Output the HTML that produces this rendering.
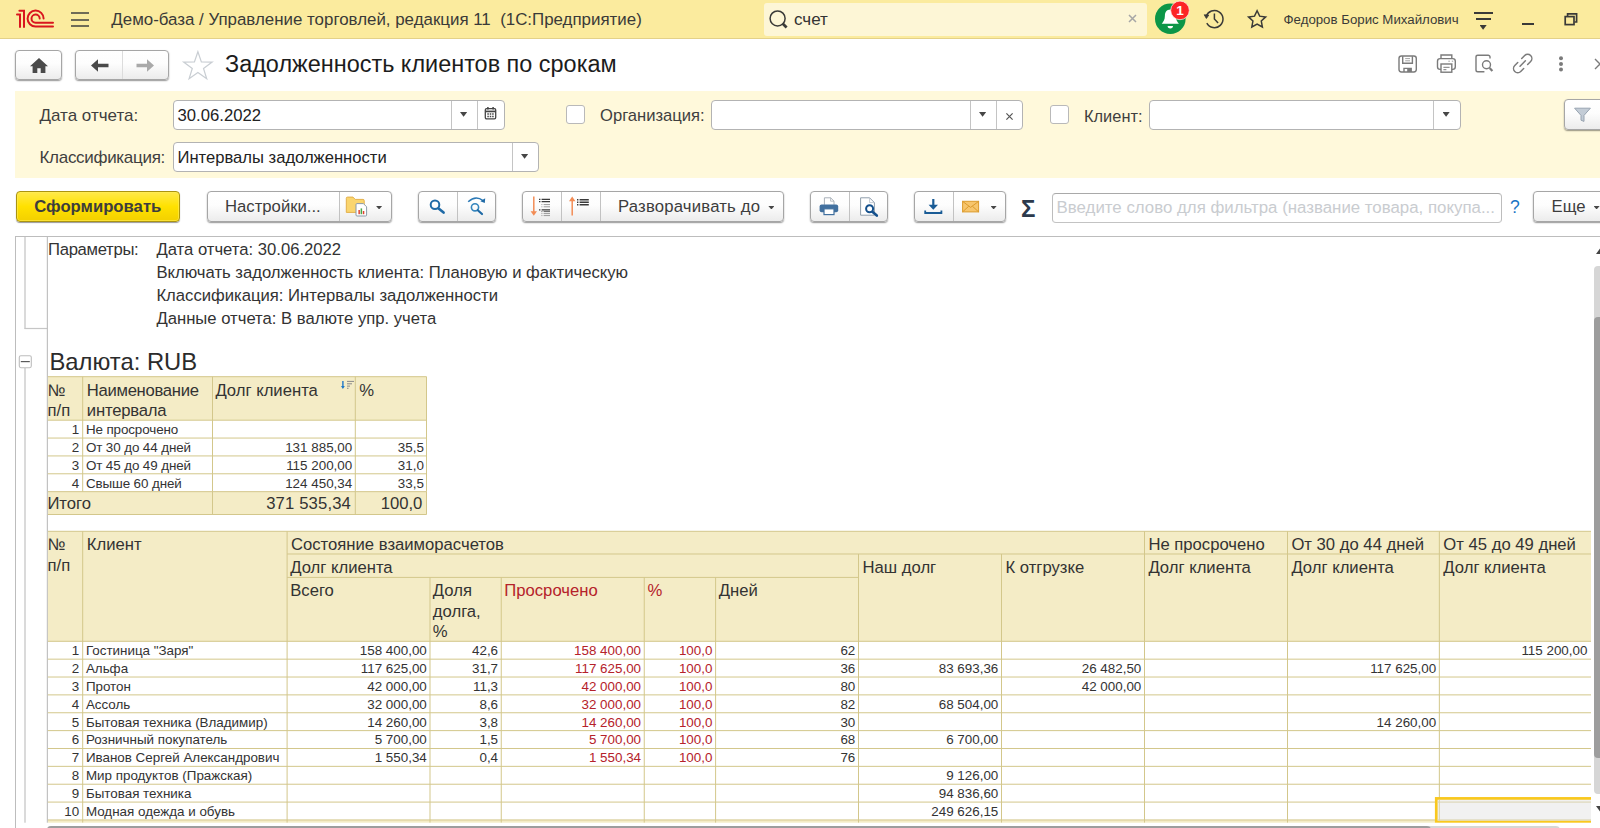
<!DOCTYPE html><html lang="ru"><head><meta charset="utf-8"><title>Задолженность клиентов по срокам</title><style>
*{box-sizing:border-box;margin:0;padding:0}
html,body{width:1600px;height:828px;overflow:hidden;background:#fff}
body{font-family:"Liberation Sans",Arial,sans-serif;color:#333;position:relative}
.abs{position:absolute}
.t{position:absolute;white-space:pre;line-height:1}
#top{position:absolute;left:0;top:0;width:1600px;height:39px;background:#fbeb9e;border-bottom:1px solid #e3d189}
#search{position:absolute;left:764px;top:2.5px;width:382.5px;height:33px;background:#fdf6d6;border-radius:3px}
.btn{position:absolute;border:1px solid #a6a6a6;border-radius:4px;background:linear-gradient(#ffffff 0%,#fdfdfd 45%,#ececec 100%);box-shadow:0 1px 1.5px rgba(0,0,0,.42)}
.sep{position:absolute;top:0;bottom:0;width:1px;background:#c2c2c2;margin-left:-0.5px}
#panel{position:absolute;left:15px;top:91px;width:1585px;height:87px;background:#fff9db}
.inp{position:absolute;background:#fff;border:1px solid #b3b3b3;border-radius:4px}
.inp .sep{background:#c4c4c4}
.chk{position:absolute;width:18.5px;height:18.5px;margin:0.4px 0 0 0.4px;background:#fff;border:1px solid #b9b9b9;border-radius:3px}
.lbl{font-size:17px;color:#3f3f3f}
.arr.s{width:6px;height:3.6px;margin:0.6px 0 0 0.6px}
.arr{position:absolute;width:7.2px;height:4.8px;background:#464646;clip-path:polygon(0 0,100% 0,50% 100%)}
#sheet{position:absolute;left:15px;top:236px;width:1585px;height:592px;border-top:1px solid #b9b9b9;border-left:1px solid #b9b9b9;overflow:hidden}
.hc{position:absolute;background:#f4ecc8;border-right:1px solid #d8cc97;border-bottom:1px solid #d8cc97;font-size:16.67px;color:#333;line-height:20.5px;white-space:pre;overflow:hidden}
.dc{position:absolute;background:#fff;border-right:1px solid #d8cc97;border-bottom:1px solid #d8cc97;font-size:13.4px;color:#333;line-height:17px;white-space:pre;overflow:hidden}
.r{text-align:right}
.red{color:#b5211f}
</style></head><body>
<div id="top">
<svg class="abs" style="left:0;top:0" width="60" height="38" viewBox="0 0 60 38" fill="none" stroke="#d9161e" stroke-width="2" stroke-linecap="round" stroke-linejoin="miter"><path d="M19.4 10.7 H24 V27"/><path d="M17 14.5 H20 V27"/><path d="M43.6 18.5 A8 8 0 1 0 35.6 26.6 H53"/><path d="M39.7 18.5 A4.1 4.1 0 1 0 35.6 22.8 H53"/></svg>
<div class="abs" style="left:71px;top:12px;width:18px;height:1.5px;background:#6f6b57"></div><div class="abs" style="left:71px;top:19px;width:18px;height:1.5px;background:#6f6b57"></div><div class="abs" style="left:71px;top:25px;width:18px;height:1.5px;background:#6f6b57"></div>
<div class="t" style="left:111.3px;top:12.4px;font-size:16.9px;color:#3a3a38">Демо-база / Управление торговлей, редакция 11  (1С:Предприятие)</div>
<div id="search"><svg class="abs" style="left:2.5px;top:5px" width="24" height="24" viewBox="0 0 24 24" fill="none" stroke="#3a3a38" stroke-width="1.5"><circle cx="10.6" cy="10.4" r="7.5"/><path d="M15.6 15.6 L19.6 19.6" stroke-width="2.8"/></svg><div class="t" style="left:30px;top:8px;font-size:17px;color:#333">счет</div><svg class="abs" style="left:364px;top:11px" width="9" height="9" viewBox="0 0 9 9" stroke="#a6a6a6" stroke-width="1.5"><path d="M1 1 L8 8 M8 1 L1 8"/></svg></div>
<svg class="abs" style="left:1153px;top:0" width="40" height="38" viewBox="0 0 40 38"><circle cx="17.3" cy="18.8" r="15.3" fill="#0c9647"/><path d="M17.3 9.5 c-3.6 0 -5.4 2.8 -5.4 6.2 c0 4 -1.6 6.2 -3.2 8 h17.2 c-1.6 -1.8 -3.2 -4 -3.2 -8 c0 -3.4 -1.8 -6.2 -5.4 -6.2z" fill="#fff"/><path d="M14.6 26 h5.4 a2.7 2.4 0 0 1 -5.4 0z" fill="#fff"/><circle cx="27" cy="10.4" r="9.3" fill="#fc2526" stroke="#fff5f0" stroke-width="0.7"/><text x="27" y="15.2" text-anchor="middle" style="font-family:'Liberation Sans',sans-serif;font-weight:700;font-size:13.5px" fill="#fff">1</text></svg>
<svg class="abs" style="left:1200px;top:0" width="30" height="38" viewBox="0 0 30 38" fill="none" stroke="#3a3a38" stroke-width="1.5"><path d="M6.18 16.59 A8.6 8.6 0 1 1 6.81 23.14"/><path d="M4.2 14.8 L8.8 15.1 L6.4 18.5 Z" fill="#3a3a38" stroke-width="0.8"/><path d="M14.4 13.6 V18.9 L18.1 22.9"/></svg>
<svg class="abs" style="left:1240px;top:0" width="36" height="38" viewBox="0 0 36 38" fill="none" stroke="#3a3a38" stroke-width="1.5" stroke-linejoin="miter"><path d="M17.10 10.70 L19.69 16.14 L25.66 16.92 L21.28 21.06 L22.39 26.98 L17.10 24.10 L11.81 26.98 L12.92 21.06 L8.54 16.92 L14.51 16.14 Z"/></svg>
<div class="t" style="left:1283.5px;top:12.5px;font-size:13.25px;color:#3a3a38">Федоров Борис Михайлович</div>
<div class="abs" style="left:1474px;top:12px;width:19px;height:1.6px;background:#3a3a38"></div><div class="abs" style="left:1476px;top:18.4px;width:15px;height:1.6px;background:#3a3a38"></div><div class="arr" style="left:1479.5px;top:25px;background:#3a3a38"></div>
<div class="abs" style="left:1522px;top:23.2px;width:12px;height:2px;background:#3a3a38"></div>
<svg class="abs" style="left:1563px;top:12px" width="16" height="15" viewBox="0 0 16 15" fill="none" stroke="#3a3a38" stroke-width="1.7"><path d="M4.6 4.2 V1.9 H13.6 V10 H11.4"/><rect x="2.2" y="4.6" width="8.8" height="8"/></svg>
</div>
<div class="btn" style="left:15px;top:49.5px;width:47px;height:30px"><svg class="abs" style="left:13px;top:6px" width="20" height="17" viewBox="0 0 20 17" fill="#4a4a4a"><path d="M10 1 L19 9.2 H16.4 V16 H11.7 V11.2 H8.3 V16 H3.6 V9.2 H1 Z"/></svg></div>
<div class="btn" style="left:75px;top:49.5px;width:94px;height:30px"><div class="sep" style="left:46px;background:#dcdcdc"></div><svg class="abs" style="left:14px;top:7px" width="20" height="15" viewBox="0 0 20 15" fill="#4a4a4a"><path d="M1 7.5 L8 1.3 V5.8 H18.5 V9.2 H8 V13.7 Z"/></svg><svg class="abs" style="left:59px;top:7px" width="20" height="15" viewBox="0 0 20 15" fill="#a9a9a9"><path d="M19 7.5 L12 1.3 V5.8 H1.5 V9.2 H12 V13.7 Z"/></svg></div>
<svg class="abs" style="left:180px;top:48px" width="36" height="36" viewBox="0 0 36 36" fill="none" stroke="#c9ced3" stroke-width="1.2"><path d="M17.90 3.70 L21.37 13.93 L32.17 14.06 L23.51 20.52 L26.72 30.84 L17.90 24.60 L9.08 30.84 L12.29 20.52 L3.63 14.06 L14.43 13.93 Z"/></svg>
<div class="t" style="left:225px;top:53.4px;font-size:23.45px;color:#1c1c1c">Задолженность клиентов по срокам</div>
<svg class="abs" style="left:1390px;top:48px" width="210" height="32" viewBox="1390 48 210 32" fill="none" stroke="#7b7b7b" stroke-width="1.4"><rect x="1399" y="56" width="17.3" height="16" rx="2.4"/><path d="M1402.7 56.2 V63.2 H1412.4 V56.2"/><path d="M1405.2 58.6 H1410 M1405.2 60.8 H1410" stroke-width="0.9" stroke="#9a9a9a"/><path d="M1404 72 V68.4 H1411.2 V72"/><rect x="1407.2" y="68.6" width="3.8" height="3.4" fill="#7b7b7b" stroke="none"/><path d="M1441 58.2 V55 H1451.8 V58.2"/><rect x="1437.5" y="58.6" width="17.8" height="10.8" rx="2.6"/><rect x="1441" y="64" width="10.8" height="8.2" fill="#fff"/><path d="M1443.4 67.3 H1449.6 M1443.4 69.7 H1446.4" stroke-width="1"/><path d="M1448.4 61.2 H1449.8 M1451.8 61.2 H1453.2" stroke-width="1" stroke="#9a9a9a"/><path d="M1490 58.6 V57 a1.8 1.8 0 0 0 -1.8 -1.8 H1477.8 a1.8 1.8 0 0 0 -1.8 1.8 V70 a1.8 1.8 0 0 0 1.8 1.8 H1484.4"/><circle cx="1486.5" cy="64.8" r="4"/><path d="M1489.6 68 L1492.4 70.9" stroke-width="2.2"/><g transform="translate(1522.7 63.5) rotate(-45)" stroke-width="1.5" stroke-linecap="round"><path d="M2.8 -4.2 H7 A4.2 4.2 0 0 1 7 4.2 H2.8"/><path d="M-2.8 -4.2 H-7 A4.2 4.2 0 0 0 -7 4.2 H-2.8"/><path d="M-3.8 0 H3.8"/></g><circle cx="1561" cy="58.3" r="2" fill="#7b7b7b" stroke="none"/><circle cx="1561" cy="64" r="2" fill="#7b7b7b" stroke="none"/><circle cx="1561" cy="69.6" r="2" fill="#7b7b7b" stroke="none"/></svg>
<svg class="abs" style="left:1594px;top:58px" width="12" height="12" viewBox="0 0 12 12" stroke="#7b7b7b" stroke-width="1.4"><path d="M1 1 L11 11 M11 1 L1 11"/></svg>
<div id="panel"></div>
<div class="t lbl" style="left:39.5px;top:107px">Дата отчета:</div>
<div class="inp" style="left:173px;top:100px;width:331.5px;height:30px"><div class="t" style="left:3.5px;top:7.4px;font-size:16.7px;color:#222">30.06.2022</div><div class="sep" style="left:277.5px"></div><div class="sep" style="left:303.5px"></div><div class="arr" style="left:286px;top:11px"></div>
<svg class="abs" style="left:310.3px;top:5.2px" width="13" height="14.4" viewBox="0 0 14 15" fill="none" stroke="#444" stroke-width="1.4"><rect x="1.4" y="2.6" width="11.2" height="11" rx="1.4"/><path d="M1.4 5.6 H12.6" stroke-width="1.8"/><path d="M4.2 0.8 V3.4 M9.8 0.8 V3.4" stroke-width="1.6"/><path d="M3.6 8.4 H10.4 M3.6 11 H10.4" stroke-width="1.5" stroke-dasharray="1.6 1"/></svg></div>
<div class="chk" style="left:566px;top:105px"></div>
<div class="t lbl" style="left:600px;top:107.6px;font-size:16.6px">Организация:</div>
<div class="inp" style="left:711px;top:100px;width:312px;height:30px"><div class="sep" style="left:258px"></div><div class="sep" style="left:284.5px"></div><div class="arr" style="left:267px;top:11px"></div><svg class="abs" style="left:293px;top:10.5px" width="9" height="9" viewBox="0 0 9 9" stroke="#555" stroke-width="1.2"><path d="M1.4 1.4 L7.6 7.6 M7.6 1.4 L1.4 7.6"/></svg></div>
<div class="chk" style="left:1050px;top:105px"></div>
<div class="t lbl" style="left:1084px;top:107.6px;font-size:16.4px">Клиент:</div>
<div class="inp" style="left:1149px;top:100px;width:311.5px;height:30px"><div class="sep" style="left:283.5px"></div><div class="arr" style="left:292.5px;top:11px"></div></div>
<div class="btn" style="left:1564px;top:98.5px;width:50px;height:31px"><svg class="abs" style="left:8px;top:6px" width="20" height="18" viewBox="0 0 20 18" fill="#c3ccd6" stroke="#98a4b1" stroke-width="1"><path d="M1.6 2.2 H17.4 L11 9.4 V15.4 L8 14.2 V9.4 Z"/></svg></div>
<div class="t lbl" style="left:39.5px;top:149px;letter-spacing:-0.3px">Классификация:</div>
<div class="inp" style="left:173px;top:142px;width:366px;height:30px"><div class="t" style="left:3.5px;top:7.4px;font-size:16.6px;color:#222">Интервалы задолженности</div><div class="sep" style="left:338.5px"></div><div class="arr" style="left:347px;top:11px"></div></div>
<div class="abs" style="left:15.5px;top:190.5px;width:164.5px;height:31.5px;border:1px solid #ab940f;border-radius:4px;background:linear-gradient(#ffe94a 0%,#ffe100 50%,#f3d000 100%);box-shadow:0 1px 1px rgba(0,0,0,.4),inset 0 0 0 1px rgba(255,236,90,.6)"><div class="t" style="left:0;right:0;top:7.2px;text-align:center;font-size:16.7px;font-weight:700;color:#3d3d3d">Сформировать</div></div>
<div class="btn" style="left:206.5px;top:190.5px;height:31px;width:185px"><div class="t" style="left:17.5px;top:7.7px;font-size:16.7px;color:#3d3d3d">Настройки...</div><div class="sep" style="left:131.5px"></div><div class="arr s" style="left:168px;top:13.8px"></div></div>
<div class="btn" style="left:418px;top:190.5px;height:31px;width:77.5px"><div class="sep" style="left:38.5px"></div></div>
<div class="btn" style="left:522px;top:190.5px;height:31px;width:261.5px"><div class="sep" style="left:38.5px"></div><div class="sep" style="left:77.5px"></div><div class="t" style="left:95px;top:7.7px;font-size:16.7px;color:#3d3d3d;letter-spacing:0.2px">Разворачивать до</div><div class="arr s" style="left:244.8px;top:13.8px"></div></div>
<div class="btn" style="left:810px;top:190.5px;height:31px;width:78px"><div class="sep" style="left:38.5px"></div></div>
<div class="btn" style="left:914px;top:190.5px;height:31px;width:91.5px"><div class="sep" style="left:38px"></div><div class="arr s" style="left:75px;top:13.8px"></div></div>
<svg class="abs" style="left:0;top:186px" width="1600" height="40" viewBox="0 186 1600 40" fill="none"><path d="M346.3 198.3 a1.2 1.2 0 0 1 1.2 -1.2 H353 L355.2 199.4 H363 a1.2 1.2 0 0 1 1.2 1.2 V212.4 H346.3 Z" fill="#fad56e" stroke="#e3b04b" stroke-width="1"/><path d="M356 204.6 a1 1 0 0 1 1 -1 H363.4 L366.6 206.8 V215 a1 1 0 0 1 -1 1 H357 a1 1 0 0 1 -1 -1 Z" fill="#fff" stroke="#8b9aa8" stroke-width="1"/><rect x="358.4" y="210" width="1.5" height="4.2" fill="#e0442e"/><rect x="360.6" y="208.4" width="1.5" height="5.8" fill="#4aa84a"/><rect x="362.8" y="211" width="1.5" height="3.2" fill="#e0442e"/><circle cx="435" cy="204.7" r="4.3" stroke="#1f6aa6" stroke-width="2"/><path d="M438.6 208.4 L443.6 212.6" stroke="#1f6aa6" stroke-width="2.6" stroke-linecap="round"/><circle cx="475" cy="207.3" r="3.6" stroke="#3585bd" stroke-width="1.6"/><path d="M477.8 210.2 L482 214" stroke="#1f6aa6" stroke-width="2.2" stroke-linecap="round"/><path d="M468.2 201.8 Q475.6 194.8 483 200.6" stroke="#2a78b5" stroke-width="1.5"/><path d="M485.2 198.2 L484.8 203 L480.4 201.2 Z" fill="#1f6aa6"/><path d="M533.8 196.6 V213.5" stroke="#f28c55" stroke-width="1.5"/><path d="M530.6 211.2 L533.8 215.8 L537 211.2 Z" fill="#f28c55"/><path d="M539 199.4 H540.4 M541.6 199.4 H550 M539 201.6 H540.4 M541.6 201.6 H550 M539 209.8 H540.4 M541.6 209.8 H550" stroke="#3a3a3a" stroke-width="1.3"/><path d="M541.4 211.6 H542.4 M543.6 211.6 H550" stroke="#666" stroke-width="1"/><path d="M541.4 204.6 H542.4 M543.6 204.6 H550 M541.4 206.8 H542.4 M543.6 206.8 H550 M541.4 213.6 H542.4 M543.6 213.6 H550 M541.4 215.6 H542.4 M543.6 215.6 H550" stroke="#9a9a9a" stroke-width="1"/><path d="M572.2 199 V215.6" stroke="#f28c55" stroke-width="1.5"/><path d="M569 201.2 L572.2 196.4 L575.4 201.2 Z" fill="#f28c55"/><path d="M577 199.8 H578.4 M579.6 199.8 H588.8 M577 202.2 H578.4 M579.6 202.2 H588.8 M577 204.7 H578.4 M579.6 204.7 H588.8" stroke="#3a3a3a" stroke-width="1.4"/><path d="M824.4 204.8 V197.8 H830.6 L834 201.2 V204.8" fill="#fff" stroke="#a8b0b8" stroke-width="1"/><path d="M830.6 197.8 V201.2 H834" stroke="#a8b0b8" stroke-width="0.8"/><rect x="819.6" y="204.4" width="18.6" height="7.8" rx="2" fill="#41709f"/><rect x="824" y="208.8" width="10" height="5.8" fill="#fff" stroke="#41709f" stroke-width="1.2"/><path d="M860.6 197.8 H869.6 L874.4 202.6 V215.2 H860.6 Z" fill="#fff" stroke="#8f9dab" stroke-width="1"/><path d="M869.6 197.8 V202.6 H874.4" stroke="#b5bec7" stroke-width="0.8"/><circle cx="869.6" cy="208.8" r="3.5" fill="#fff" stroke="#14508c" stroke-width="2"/><path d="M872.4 211.8 L876.8 215.6" stroke="#14508c" stroke-width="2.6" stroke-linecap="round"/><path d="M933.3 199 V207" stroke="#1a5c96" stroke-width="2.2"/><path d="M928.6 204.8 L933.3 209.8 L938 204.8 Z" fill="#1a5c96"/><path d="M925.2 210.4 V213 H941.4 V210.4" stroke="#1a5c96" stroke-width="1.8"/><rect x="962.6" y="201.3" width="16" height="10.6" fill="#f7c56c" stroke="#dc9b2c" stroke-width="1"/><path d="M962.8 201.5 L970.6 207.4 L978.4 201.5 M962.8 211.7 L968.8 206.2 M978.4 211.7 L972.4 206.2" stroke="#dc9b2c" stroke-width="1"/></svg>
<div class="t" style="left:1021px;top:197.2px;font-size:24px;font-weight:700;color:#2c3a4c">Σ</div>
<div class="inp" style="left:1052px;top:193px;width:449.5px;height:29.5px;border-color:#a9a9a9 #bdbdbd #c3c3c3 #bdbdbd"><div class="t" style="left:3.6px;top:6px;font-size:16.85px;color:#c9ccd0">Введите слово для фильтра (название товара, покупа...</div></div>
<div class="t" style="left:1510px;top:198.5px;font-size:17.5px;color:#1a73c4">?</div>
<div class="btn" style="left:1533px;top:190.5px;height:31px;width:90px"><div class="t" style="left:17.5px;top:7.7px;font-size:16.7px;color:#3d3d3d">Еще</div><div class="arr s" style="left:59px;top:13.8px"></div></div>
<svg class="abs" style="left:0;top:0" width="1600" height="828" viewBox="0 0 1600 828">
<rect x="15" y="236" width="1585" height="1" fill="#bdbdbd"/><rect x="15" y="236" width="1" height="592" fill="#bdbdbd"/><rect x="24.35" y="237" width="1.3" height="91.6" fill="#c6c6c6"/><rect x="24.35" y="327.9" width="23" height="1.2" fill="#c6c6c6"/><rect x="46.8" y="237" width="1.1" height="586" fill="#bcbcbc"/><rect x="24.35" y="368" width="1.3" height="455" fill="#c6c6c6"/><rect x="19.3" y="355.7" width="12" height="12" rx="1.6" fill="#fff" stroke="#bdbdbd" stroke-width="1.1"/><rect x="20.8" y="361" width="9" height="1.2" fill="#5a5a5a"/><rect x="47.90" y="376.70" width="378.60" height="43.50" fill="#f4ecc6"/><rect x="47.90" y="491.66" width="378.60" height="22.84" fill="#f4ecc6"/><path d="M342.9 381 V387.4" stroke="#1f78c8" stroke-width="1.4" fill="none"/><path d="M341 386 L342.9 389 L344.8 386 Z" fill="#1f78c8"/><path d="M347 381.4 H354 M347 383.8 H352 M347 386.1 H350 M347 388.3 H348.5" stroke="#8a8a8a" stroke-width="1" fill="none"/><rect x="47.90" y="531.30" width="1543.10" height="110.00" fill="#f4ecc6"/><rect x="47.90" y="819.95" width="1543.10" height="4.05" fill="#f4ecc6"/>
<path d="M47.9 376.7 H426.5 M47.9 420.2 H426.5 M47.9 438.06 H426.5 M47.9 455.93 H426.5 M47.9 473.79 H426.5 M47.9 491.66 H426.5 M47.9 514.5 H426.5 M47.9 531.3 H1591 M287.1 554.0 H1591 M287.1 577.4 H858.5 M47.9 641.3 H1591 M47.9 659.16 H1591 M47.9 677.03 H1591 M47.9 694.89 H1591 M47.9 712.76 H1591 M47.9 730.62 H1591 M47.9 748.49 H1591 M47.9 766.35 H1591 M47.9 784.22 H1591 M47.9 802.08 H1591 M47.9 819.95 H1591 M47.9 837.81 H1591 M82.7 376.7 V491.66 M82.7 531.3 V828 M212.5 376.7 V491.66 M212.5 491.66 V514.5 M287.1 531.3 V828 M355.3 376.7 V491.66 M355.3 491.66 V514.5 M426.5 376.7 V491.66 M426.5 491.66 V514.5 M430.0 577.4 V828 M501.25 577.4 V828 M644.25 577.4 V828 M715.6 577.4 V828 M858.5 554.0 V828 M1001.5 554.0 V828 M1144.5 531.3 V828 M1287.5 531.3 V828 M1439.35 531.3 V828" stroke="#d3c78b" stroke-width="1" fill="none"/>
<rect x="1436.25" y="798.4" width="170" height="23.6" fill="#f1f1f1" stroke="#f9c81e" stroke-width="2.7"/>
<path d="M1437.6 802.08 H1600 M1439.35 799.8 V821.2 M1437.6 819.95 H1600" stroke="#d9d2ae" stroke-width="1" fill="none"/>
<rect x="1591" y="237" width="9" height="591" fill="#fff"/><rect x="16" y="822.7" width="1584" height="5.3" fill="#fff"/>
<rect x="1594" y="266" width="12" height="528" rx="4" fill="#d6d6d6"/><rect x="1594" y="317" width="12" height="441" rx="4" fill="#9d9d9d"/>
<path d="M1596 254 L1600 248.6 L1604 254 Z M1596 806 L1600 811.4 L1604 806 Z" fill="#444"/>
<rect x="47" y="826" width="1513" height="10" rx="4" fill="#d6d6d6"/><rect x="47" y="826" width="1384" height="10" rx="4" fill="#9d9d9d"/>
</svg>
<div class="t" style="left:48.00px;top:241.59px;font-size:16.67px;color:#333;letter-spacing:-0.3px">Параметры:</div>
<div class="t" style="left:156.40px;top:241.59px;font-size:16.67px;color:#333;">Дата отчета: 30.06.2022</div>
<div class="t" style="left:156.40px;top:264.59px;font-size:16.67px;color:#333;">Включать задолженность клиента: Плановую и фактическую</div>
<div class="t" style="left:156.40px;top:287.59px;font-size:16.67px;color:#333;">Классификация: Интервалы задолженности</div>
<div class="t" style="left:156.40px;top:310.59px;font-size:16.67px;color:#333;">Данные отчета: В валюте упр. учета</div>
<div class="t" style="left:49.50px;top:349.55px;font-size:23.8px;color:#2b2b2b;">Валюта: RUB</div>
<div class="t" style="left:47.50px;top:382.59px;font-size:16.67px;color:#333;">№</div>
<div class="t" style="left:47.50px;top:403.09px;font-size:16.67px;color:#333;">п/п</div>
<div class="t" style="left:86.80px;top:382.59px;font-size:16.67px;color:#333;letter-spacing:-0.3px">Наименование</div>
<div class="t" style="left:86.80px;top:403.09px;font-size:16.67px;color:#333;letter-spacing:-0.2px">интервала</div>
<div class="t" style="left:215.40px;top:382.59px;font-size:16.67px;color:#333;">Долг клиента</div>
<div class="t" style="left:359.30px;top:382.59px;font-size:16.67px;color:#333;">%</div>
<div class="t" style="right:1520.90px;top:423.06px;font-size:13.4px;color:#333;">1</div>
<div class="t" style="left:85.90px;top:423.06px;font-size:13.4px;color:#333;letter-spacing:-0.1px">Не просрочено</div>
<div class="t" style="right:1520.90px;top:440.92px;font-size:13.4px;color:#333;">2</div>
<div class="t" style="left:85.90px;top:440.92px;font-size:13.4px;color:#333;letter-spacing:-0.1px">От 30 до 44 дней</div>
<div class="t" style="right:1247.80px;top:440.92px;font-size:13.4px;color:#333;">131 885,00</div>
<div class="t" style="right:1176.10px;top:440.92px;font-size:13.4px;color:#333;">35,5</div>
<div class="t" style="right:1520.90px;top:458.79px;font-size:13.4px;color:#333;">3</div>
<div class="t" style="left:85.90px;top:458.79px;font-size:13.4px;color:#333;letter-spacing:-0.1px">От 45 до 49 дней</div>
<div class="t" style="right:1247.80px;top:458.79px;font-size:13.4px;color:#333;">115 200,00</div>
<div class="t" style="right:1176.10px;top:458.79px;font-size:13.4px;color:#333;">31,0</div>
<div class="t" style="right:1520.90px;top:476.65px;font-size:13.4px;color:#333;">4</div>
<div class="t" style="left:85.90px;top:476.65px;font-size:13.4px;color:#333;letter-spacing:-0.1px">Свыше 60 дней</div>
<div class="t" style="right:1247.80px;top:476.65px;font-size:13.4px;color:#333;">124 450,34</div>
<div class="t" style="right:1176.10px;top:476.65px;font-size:13.4px;color:#333;">33,5</div>
<div class="t" style="left:47.40px;top:496.35px;font-size:16.67px;color:#333;">Итого</div>
<div class="t" style="right:1249.00px;top:496.35px;font-size:16.67px;color:#333;letter-spacing:0.15px">371 535,34</div>
<div class="t" style="right:1177.70px;top:496.35px;font-size:16.67px;color:#333;">100,0</div>
<div class="t" style="left:47.50px;top:537.39px;font-size:16.67px;color:#333;">№</div>
<div class="t" style="left:47.50px;top:557.89px;font-size:16.67px;color:#333;">п/п</div>
<div class="t" style="left:86.80px;top:537.39px;font-size:16.67px;color:#333;">Клиент</div>
<div class="t" style="left:291.00px;top:537.39px;font-size:16.67px;color:#333;">Состояние взаиморасчетов</div>
<div class="t" style="left:1148.40px;top:537.39px;font-size:16.67px;color:#333;">Не просрочено</div>
<div class="t" style="left:1291.40px;top:537.39px;font-size:16.67px;color:#333;">От 30 до 44 дней</div>
<div class="t" style="left:1443.30px;top:537.39px;font-size:16.67px;color:#333;">От 45 до 49 дней</div>
<div class="t" style="left:290.20px;top:559.99px;font-size:16.67px;color:#333;">Долг клиента</div>
<div class="t" style="left:862.50px;top:559.99px;font-size:16.67px;color:#333;">Наш долг</div>
<div class="t" style="left:1005.50px;top:559.99px;font-size:16.67px;color:#333;">К отгрузке</div>
<div class="t" style="left:1148.40px;top:559.99px;font-size:16.67px;color:#333;">Долг клиента</div>
<div class="t" style="left:1291.40px;top:559.99px;font-size:16.67px;color:#333;">Долг клиента</div>
<div class="t" style="left:1443.30px;top:559.99px;font-size:16.67px;color:#333;">Долг клиента</div>
<div class="t" style="left:290.20px;top:583.29px;font-size:16.67px;color:#333;">Всего</div>
<div class="t" style="left:432.80px;top:583.29px;font-size:16.67px;color:#333;">Доля</div>
<div class="t" style="left:432.80px;top:603.79px;font-size:16.67px;color:#333;">долга,</div>
<div class="t" style="left:432.80px;top:624.29px;font-size:16.67px;color:#333;">%</div>
<div class="t" style="left:504.30px;top:583.29px;font-size:16.67px;color:#b5222a;">Просрочено</div>
<div class="t" style="left:647.60px;top:583.29px;font-size:16.67px;color:#b5222a;">%</div>
<div class="t" style="left:718.70px;top:583.29px;font-size:16.67px;color:#333;">Дней</div>
<div class="t" style="right:1520.90px;top:644.16px;font-size:13.4px;color:#333;">1</div>
<div class="t" style="left:85.90px;top:644.16px;font-size:13.4px;color:#333;">Гостиница "Заря"</div>
<div class="t" style="right:1173.20px;top:644.16px;font-size:13.4px;color:#333;">158 400,00</div>
<div class="t" style="right:1101.95px;top:644.16px;font-size:13.4px;color:#333;">42,6</div>
<div class="t" style="right:958.95px;top:644.16px;font-size:13.4px;color:#b5222a;">158 400,00</div>
<div class="t" style="right:887.60px;top:644.16px;font-size:13.4px;color:#b5222a;">100,0</div>
<div class="t" style="right:744.70px;top:644.16px;font-size:13.4px;color:#333;">62</div>
<div class="t" style="right:12.60px;top:644.16px;font-size:13.4px;color:#333;">115 200,00</div>
<div class="t" style="right:1520.90px;top:662.02px;font-size:13.4px;color:#333;">2</div>
<div class="t" style="left:85.90px;top:662.02px;font-size:13.4px;color:#333;">Альфа</div>
<div class="t" style="right:1173.20px;top:662.02px;font-size:13.4px;color:#333;">117 625,00</div>
<div class="t" style="right:1101.95px;top:662.02px;font-size:13.4px;color:#333;">31,7</div>
<div class="t" style="right:958.95px;top:662.02px;font-size:13.4px;color:#b5222a;">117 625,00</div>
<div class="t" style="right:887.60px;top:662.02px;font-size:13.4px;color:#b5222a;">100,0</div>
<div class="t" style="right:744.70px;top:662.02px;font-size:13.4px;color:#333;">36</div>
<div class="t" style="right:601.70px;top:662.02px;font-size:13.4px;color:#333;">83 693,36</div>
<div class="t" style="right:458.70px;top:662.02px;font-size:13.4px;color:#333;">26 482,50</div>
<div class="t" style="right:163.85px;top:662.02px;font-size:13.4px;color:#333;">117 625,00</div>
<div class="t" style="right:1520.90px;top:679.89px;font-size:13.4px;color:#333;">3</div>
<div class="t" style="left:85.90px;top:679.89px;font-size:13.4px;color:#333;">Протон</div>
<div class="t" style="right:1173.20px;top:679.89px;font-size:13.4px;color:#333;">42 000,00</div>
<div class="t" style="right:1101.95px;top:679.89px;font-size:13.4px;color:#333;">11,3</div>
<div class="t" style="right:958.95px;top:679.89px;font-size:13.4px;color:#b5222a;">42 000,00</div>
<div class="t" style="right:887.60px;top:679.89px;font-size:13.4px;color:#b5222a;">100,0</div>
<div class="t" style="right:744.70px;top:679.89px;font-size:13.4px;color:#333;">80</div>
<div class="t" style="right:458.70px;top:679.89px;font-size:13.4px;color:#333;">42 000,00</div>
<div class="t" style="right:1520.90px;top:697.75px;font-size:13.4px;color:#333;">4</div>
<div class="t" style="left:85.90px;top:697.75px;font-size:13.4px;color:#333;">Ассоль</div>
<div class="t" style="right:1173.20px;top:697.75px;font-size:13.4px;color:#333;">32 000,00</div>
<div class="t" style="right:1101.95px;top:697.75px;font-size:13.4px;color:#333;">8,6</div>
<div class="t" style="right:958.95px;top:697.75px;font-size:13.4px;color:#b5222a;">32 000,00</div>
<div class="t" style="right:887.60px;top:697.75px;font-size:13.4px;color:#b5222a;">100,0</div>
<div class="t" style="right:744.70px;top:697.75px;font-size:13.4px;color:#333;">82</div>
<div class="t" style="right:601.70px;top:697.75px;font-size:13.4px;color:#333;">68 504,00</div>
<div class="t" style="right:1520.90px;top:715.62px;font-size:13.4px;color:#333;">5</div>
<div class="t" style="left:85.90px;top:715.62px;font-size:13.4px;color:#333;">Бытовая техника (Владимир)</div>
<div class="t" style="right:1173.20px;top:715.62px;font-size:13.4px;color:#333;">14 260,00</div>
<div class="t" style="right:1101.95px;top:715.62px;font-size:13.4px;color:#333;">3,8</div>
<div class="t" style="right:958.95px;top:715.62px;font-size:13.4px;color:#b5222a;">14 260,00</div>
<div class="t" style="right:887.60px;top:715.62px;font-size:13.4px;color:#b5222a;">100,0</div>
<div class="t" style="right:744.70px;top:715.62px;font-size:13.4px;color:#333;">30</div>
<div class="t" style="right:163.85px;top:715.62px;font-size:13.4px;color:#333;">14 260,00</div>
<div class="t" style="right:1520.90px;top:733.48px;font-size:13.4px;color:#333;">6</div>
<div class="t" style="left:85.90px;top:733.48px;font-size:13.4px;color:#333;">Розничный покупатель</div>
<div class="t" style="right:1173.20px;top:733.48px;font-size:13.4px;color:#333;">5 700,00</div>
<div class="t" style="right:1101.95px;top:733.48px;font-size:13.4px;color:#333;">1,5</div>
<div class="t" style="right:958.95px;top:733.48px;font-size:13.4px;color:#b5222a;">5 700,00</div>
<div class="t" style="right:887.60px;top:733.48px;font-size:13.4px;color:#b5222a;">100,0</div>
<div class="t" style="right:744.70px;top:733.48px;font-size:13.4px;color:#333;">68</div>
<div class="t" style="right:601.70px;top:733.48px;font-size:13.4px;color:#333;">6 700,00</div>
<div class="t" style="right:1520.90px;top:751.35px;font-size:13.4px;color:#333;">7</div>
<div class="t" style="left:85.90px;top:751.35px;font-size:13.4px;color:#333;">Иванов Сергей Александрович</div>
<div class="t" style="right:1173.20px;top:751.35px;font-size:13.4px;color:#333;">1 550,34</div>
<div class="t" style="right:1101.95px;top:751.35px;font-size:13.4px;color:#333;">0,4</div>
<div class="t" style="right:958.95px;top:751.35px;font-size:13.4px;color:#b5222a;">1 550,34</div>
<div class="t" style="right:887.60px;top:751.35px;font-size:13.4px;color:#b5222a;">100,0</div>
<div class="t" style="right:744.70px;top:751.35px;font-size:13.4px;color:#333;">76</div>
<div class="t" style="right:1520.90px;top:769.21px;font-size:13.4px;color:#333;">8</div>
<div class="t" style="left:85.90px;top:769.21px;font-size:13.4px;color:#333;">Мир продуктов (Пражская)</div>
<div class="t" style="right:601.70px;top:769.21px;font-size:13.4px;color:#333;">9 126,00</div>
<div class="t" style="right:1520.90px;top:787.08px;font-size:13.4px;color:#333;">9</div>
<div class="t" style="left:85.90px;top:787.08px;font-size:13.4px;color:#333;">Бытовая техника</div>
<div class="t" style="right:601.70px;top:787.08px;font-size:13.4px;color:#333;">94 836,60</div>
<div class="t" style="right:1520.90px;top:804.94px;font-size:13.4px;color:#333;">10</div>
<div class="t" style="left:85.90px;top:804.94px;font-size:13.4px;color:#333;">Модная одежда и обувь</div>
<div class="t" style="right:601.70px;top:804.94px;font-size:13.4px;color:#333;">249 626,15</div>
</body></html>
